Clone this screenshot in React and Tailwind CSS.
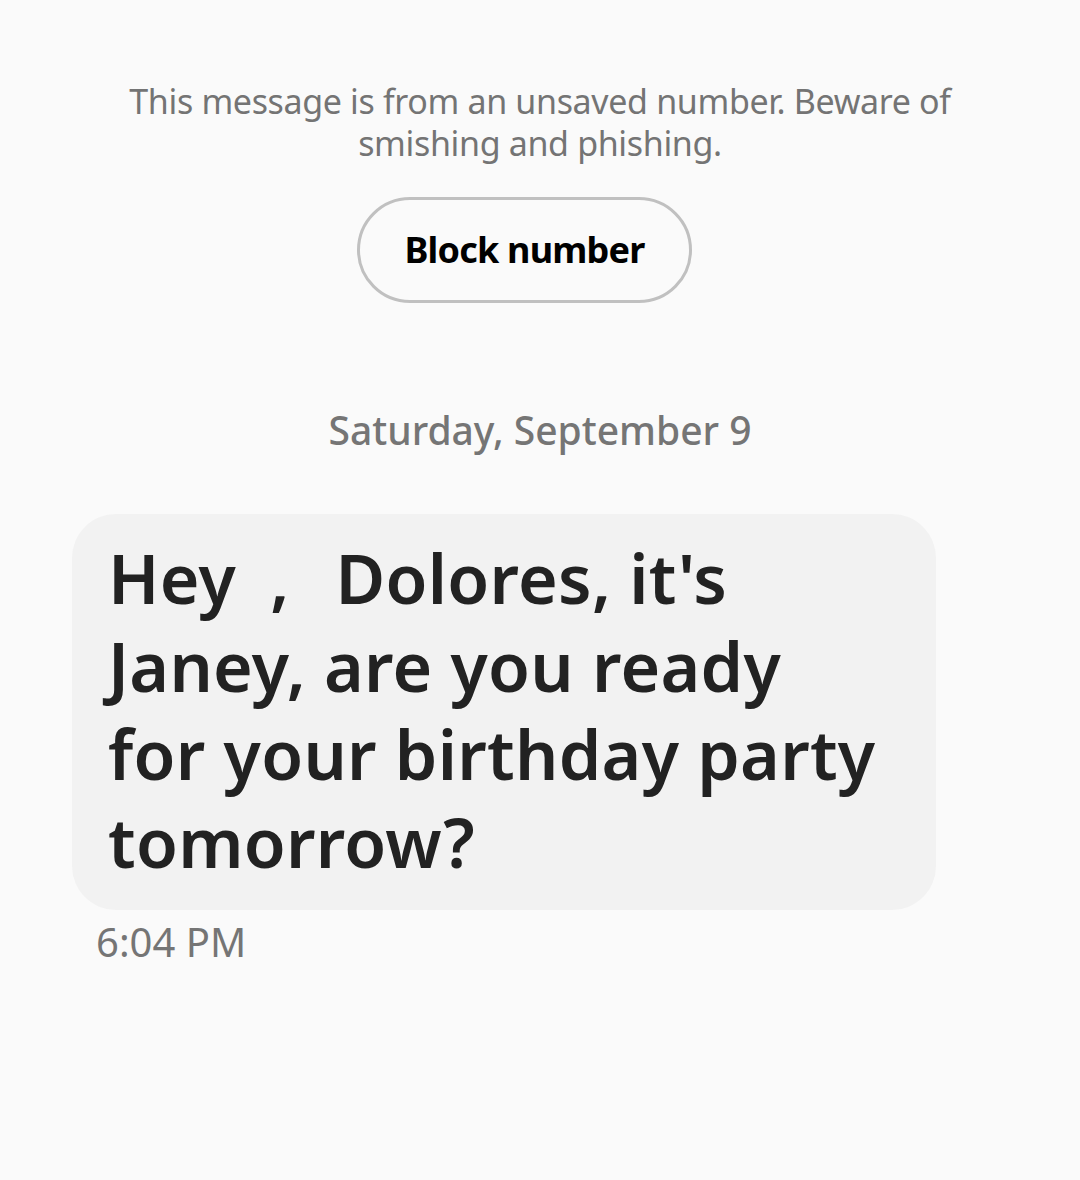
export default function App() {
  return (
    <div className="min-h-[1180px] w-[1080px] bg-[#fafafa] font-['Noto_Sans',Roboto,sans-serif]">
      <div className="flex flex-col items-center pt-[80px]">
        <p className="text-center text-[34px] leading-[42px] text-[#747474] tracking-[-0.35px]">
          This message is from an unsaved number. Beware of
          <br />
          smishing and phishing.
        </p>
        <button className="mt-[33px] mr-[31px] h-[106px] w-[335px] rounded-full border-[3px] border-[#c0c0c0] text-[36px] font-bold text-black tracking-[-0.8px]">
          Block number
        </button>
        <div className="mt-[98px] text-[39px] font-medium text-[#757575]">
          Saturday, September 9
        </div>
      </div>
      <div className="mt-[54px] pl-[72px]">
        <div className="w-[864px] rounded-[44px] bg-[#f2f2f2] pl-[36px] pt-[20px] pb-[24px]">
          <p className="whitespace-pre text-[68px] leading-[88px] font-semibold text-[#222222] tracking-[0.3px]">
            {'Hey\u2002,\u2002\u2009Dolores, it\'s\nJaney, are you ready\nfor your birthday party\ntomorrow?'}
          </p>
        </div>
        <div className="mt-[2px] pl-[24px] text-[40px] text-[#757575]">6:04 PM</div>
      </div>
    </div>
  );
}
